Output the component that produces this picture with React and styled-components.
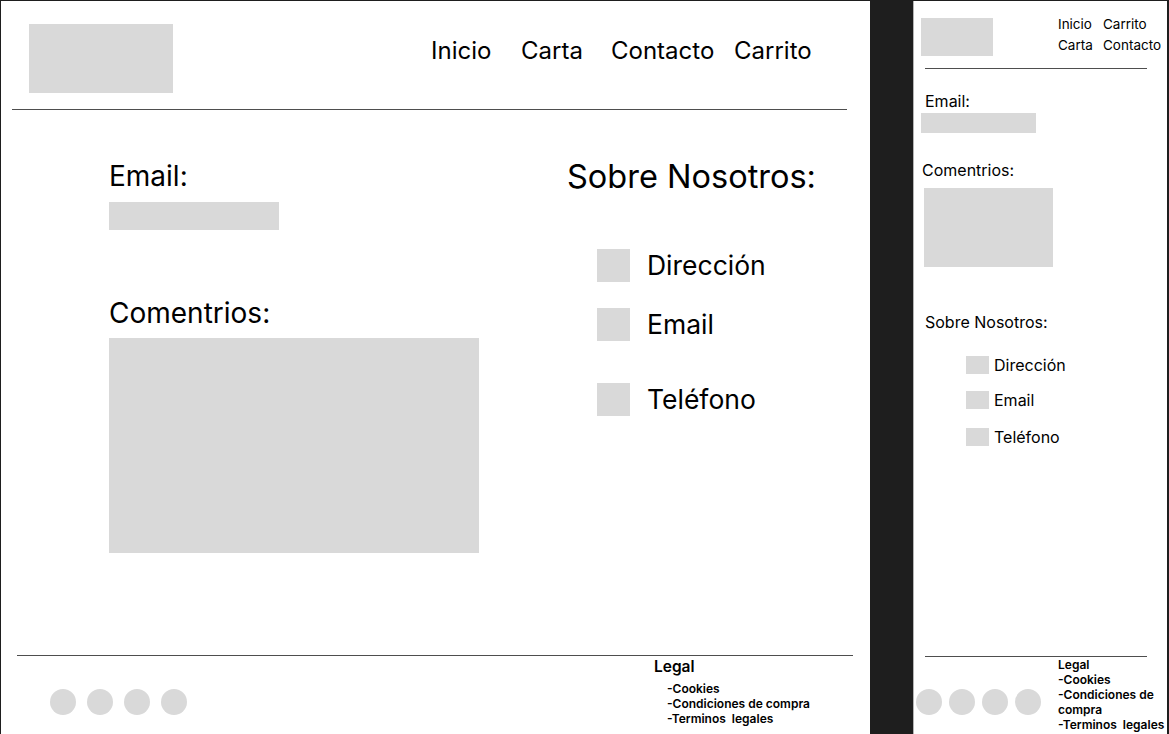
import React from 'react';
import styled, { createGlobalStyle } from 'styled-components';

// - - - - - styles

const Global = createGlobalStyle`
  html, body {
    margin: 0;
    background: #1e1e1e;
    font-family: Inter, "Noto Sans", sans-serif;
    color: #000;
  }
  body { padding: 1px 0 0 1px; overflow: hidden; }
`;

const Canvas = styled.div`
  display: flex;
  align-items: flex-start;
  gap: 43px;
`;

const Frame = styled.section`
  width: ${p => p.$width}px;
  height: 733px;
  background: #fff;
  display: flex;
  flex-direction: column;
  border-left: ${p => (p.$border ? '1px solid #b4b4b4' : 'none')};
  overflow: hidden;
`;

const Header = styled.header`
  display: flex;
  align-items: flex-start;
  height: ${p => p.$h}px;
  flex-shrink: 0;
`;

const Logo = styled.div`
  width: ${p => p.$w}px;
  height: ${p => p.$h}px;
  margin: ${p => p.$mt}px 0 0 ${p => p.$ml}px;
  background: #d9d9d9;
`;

const Nav = styled.nav`
  display: grid;
  grid-template-columns: ${p => p.$cols};
  grid-auto-rows: ${p => p.$row}px;
  align-items: center;
  margin: ${p => p.$mt}px 0 0 ${p => p.$ml}px;
  font-size: ${p => p.$size}px;
`;

const NavLink = styled.a`
  white-space: nowrap;
`;

const Rule = styled.div`
  height: 1px;
  width: ${p => p.$w}px;
  margin-left: ${p => p.$ml}px;
  background: #4e4e4e;
  flex-shrink: 0;
`;

const Main = styled.main`
  flex: 1;
  display: grid;
  grid-template-columns: ${p => p.$cols};
  align-items: start;
  padding: ${p => p.$pt}px 0 0 ${p => p.$pl}px;
`;

const Column = styled.div`
  display: flex;
  flex-direction: column;
  align-items: flex-start;
`;

const Label = styled.div`
  font-size: ${p => p.$size}px;
  line-height: ${p => p.$lh}px;
  margin: ${p => p.$mt || 0}px 0 0 ${p => p.$ml || 0}px;
  white-space: nowrap;
`;

const Field = styled.div`
  width: ${p => p.$w}px;
  height: ${p => p.$h}px;
  margin: ${p => p.$mt || 0}px 0 0 ${p => p.$ml || 0}px;
  background: #d9d9d9;
`;

const ContactList = styled.ul`
  list-style: none;
  padding: 0;
  margin: ${p => p.$mt}px 0 0 ${p => p.$ml}px;
`;

const ContactRow = styled.li`
  display: flex;
  align-items: center;
  gap: ${p => p.$gap}px;
  margin-top: ${p => p.$mt || 0}px;
  font-size: ${p => p.$size}px;
  line-height: ${p => p.$ih}px;
`;

const Square = styled.span`
  width: ${p => p.$w}px;
  height: ${p => p.$h}px;
  background: #d9d9d9;
  flex-shrink: 0;
`;

const Footer = styled.footer`
  height: ${p => p.$h}px;
  flex-shrink: 0;
  display: flex;
  flex-direction: column;
`;

const FooterRow = styled.div`
  display: grid;
  grid-template-columns: ${p => p.$cols};
  align-items: start;
`;

const Socials = styled.div`
  display: flex;
  gap: ${p => p.$gap}px;
  padding: ${p => p.$pt}px 0 0 ${p => p.$pl}px;
`;

const Dot = styled.span`
  width: 26px;
  height: 26px;
  border-radius: 50%;
  background: #d9d9d9;
`;

const Legal = styled.div`
  font-weight: 600;
  padding-top: ${p => p.$pt}px;
`;

const LegalTitle = styled.div`
  font-size: ${p => p.$size}px;
  line-height: ${p => p.$lh}px;
`;

const LegalItems = styled.div`
  font-size: 12px;
  line-height: 15px;
  margin: ${p => p.$mt}px 0 0 ${p => p.$ml}px;
`;

// - - - - - styles end

const contacts = ['Dirección', 'Email', 'Teléfono'];
const legal = ['-Cookies', '-Condiciones de compra', '-Terminos\u00a0 legales'];

const Desktop = () => (
  <Frame $width={869}>
    <Header $h={108}>
      <Logo $w={144} $h={69} $mt={23} $ml={28} />
      <Nav $cols="90px 90px 123px auto" $row={29} $mt={35} $ml={258} $size={24}>
        <NavLink>Inicio</NavLink>
        <NavLink>Carta</NavLink>
        <NavLink>Contacto</NavLink>
        <NavLink>Carrito</NavLink>
      </Nav>
    </Header>
    <Rule $w={835} $ml={11} />
    <Main $cols="458px auto" $pt={49} $pl={108}>
      <Column>
        <Label $size={28} $lh={34}>Email:</Label>
        <Field $w={170} $h={28} $mt={9} />
        <Label $size={28} $lh={34} $mt={66}>Comentrios:</Label>
        <Field $w={370} $h={215} $mt={8} />
      </Column>
      <Column>
        <Label $size={32.5} $lh={39} $mt={-2}>Sobre Nosotros:</Label>
        <ContactList $mt={53} $ml={30}>
          {contacts.map((c, i) => (
            <ContactRow key={c} $gap={17} $size={26.5} $ih={33} $mt={[0, 26, 42][i]}>
              <Square $w={33} $h={33} />
              {c}
            </ContactRow>
          ))}
        </ContactList>
      </Column>
    </Main>
    <Footer $h={79}>
      <Rule $w={836} $ml={16} />
      <FooterRow $cols="653px auto">
        <Socials $gap={11} $pt={33} $pl={49}>
          <Dot /><Dot /><Dot /><Dot />
        </Socials>
        <Legal $pt={2}>
          <LegalTitle $size={15.5} $lh={18}>Legal</LegalTitle>
          <LegalItems $mt={5} $ml={13}>
            {legal.map(l => <div key={l}>{l}</div>)}
          </LegalItems>
        </Legal>
      </FooterRow>
    </Footer>
  </Frame>
);

const Mobile = () => (
  <Frame $width={253} $border>
    <Header $h={67}>
      <Logo $w={72} $h={38} $mt={17} $ml={7} />
      <Nav $cols="45px auto" $row={21} $mt={12} $ml={65} $size={13.5}>
        <NavLink>Inicio</NavLink>
        <NavLink>Carrito</NavLink>
        <NavLink>Carta</NavLink>
        <NavLink>Contacto</NavLink>
      </Nav>
    </Header>
    <Rule $w={222} $ml={11} />
    <Main $cols="1fr" $pt={22} $pl={0}>
      <Column>
        <Label $size={16} $lh={20} $ml={11}>Email:</Label>
        <Field $w={115} $h={20} $mt={2} $ml={7} />
        <Label $size={16} $lh={20} $mt={27} $ml={8}>Comentrios:</Label>
        <Field $w={129} $h={79} $mt={8} $ml={10} />
        <Label $size={16} $lh={20} $mt={45} $ml={11}>Sobre Nosotros:</Label>
        <ContactList $mt={24} $ml={52}>
          {contacts.map((c, i) => (
            <ContactRow key={c} $gap={5} $size={16} $ih={18} $mt={[0, 17, 19][i]}>
              <Square $w={23} $h={18} />
              {c}
            </ContactRow>
          ))}
        </ContactList>
      </Column>
    </Main>
    <Footer $h={78}>
      <Rule $w={222} $ml={11} />
      <FooterRow $cols="144px auto">
        <Socials $gap={7} $pt={32} $pl={2}>
          <Dot /><Dot /><Dot /><Dot />
        </Socials>
        <Legal $pt={0}>
          <LegalTitle $size={12} $lh={15}>Legal</LegalTitle>
          <LegalItems $mt={0} $ml={0}>
            {legal.map(l => <div key={l}>{l}</div>)}
          </LegalItems>
        </Legal>
      </FooterRow>
    </Footer>
  </Frame>
);

const App = () => (
  <>
    <Global />
    <Canvas>
      <Desktop />
      <Mobile />
    </Canvas>
  </>
);

export default App;
